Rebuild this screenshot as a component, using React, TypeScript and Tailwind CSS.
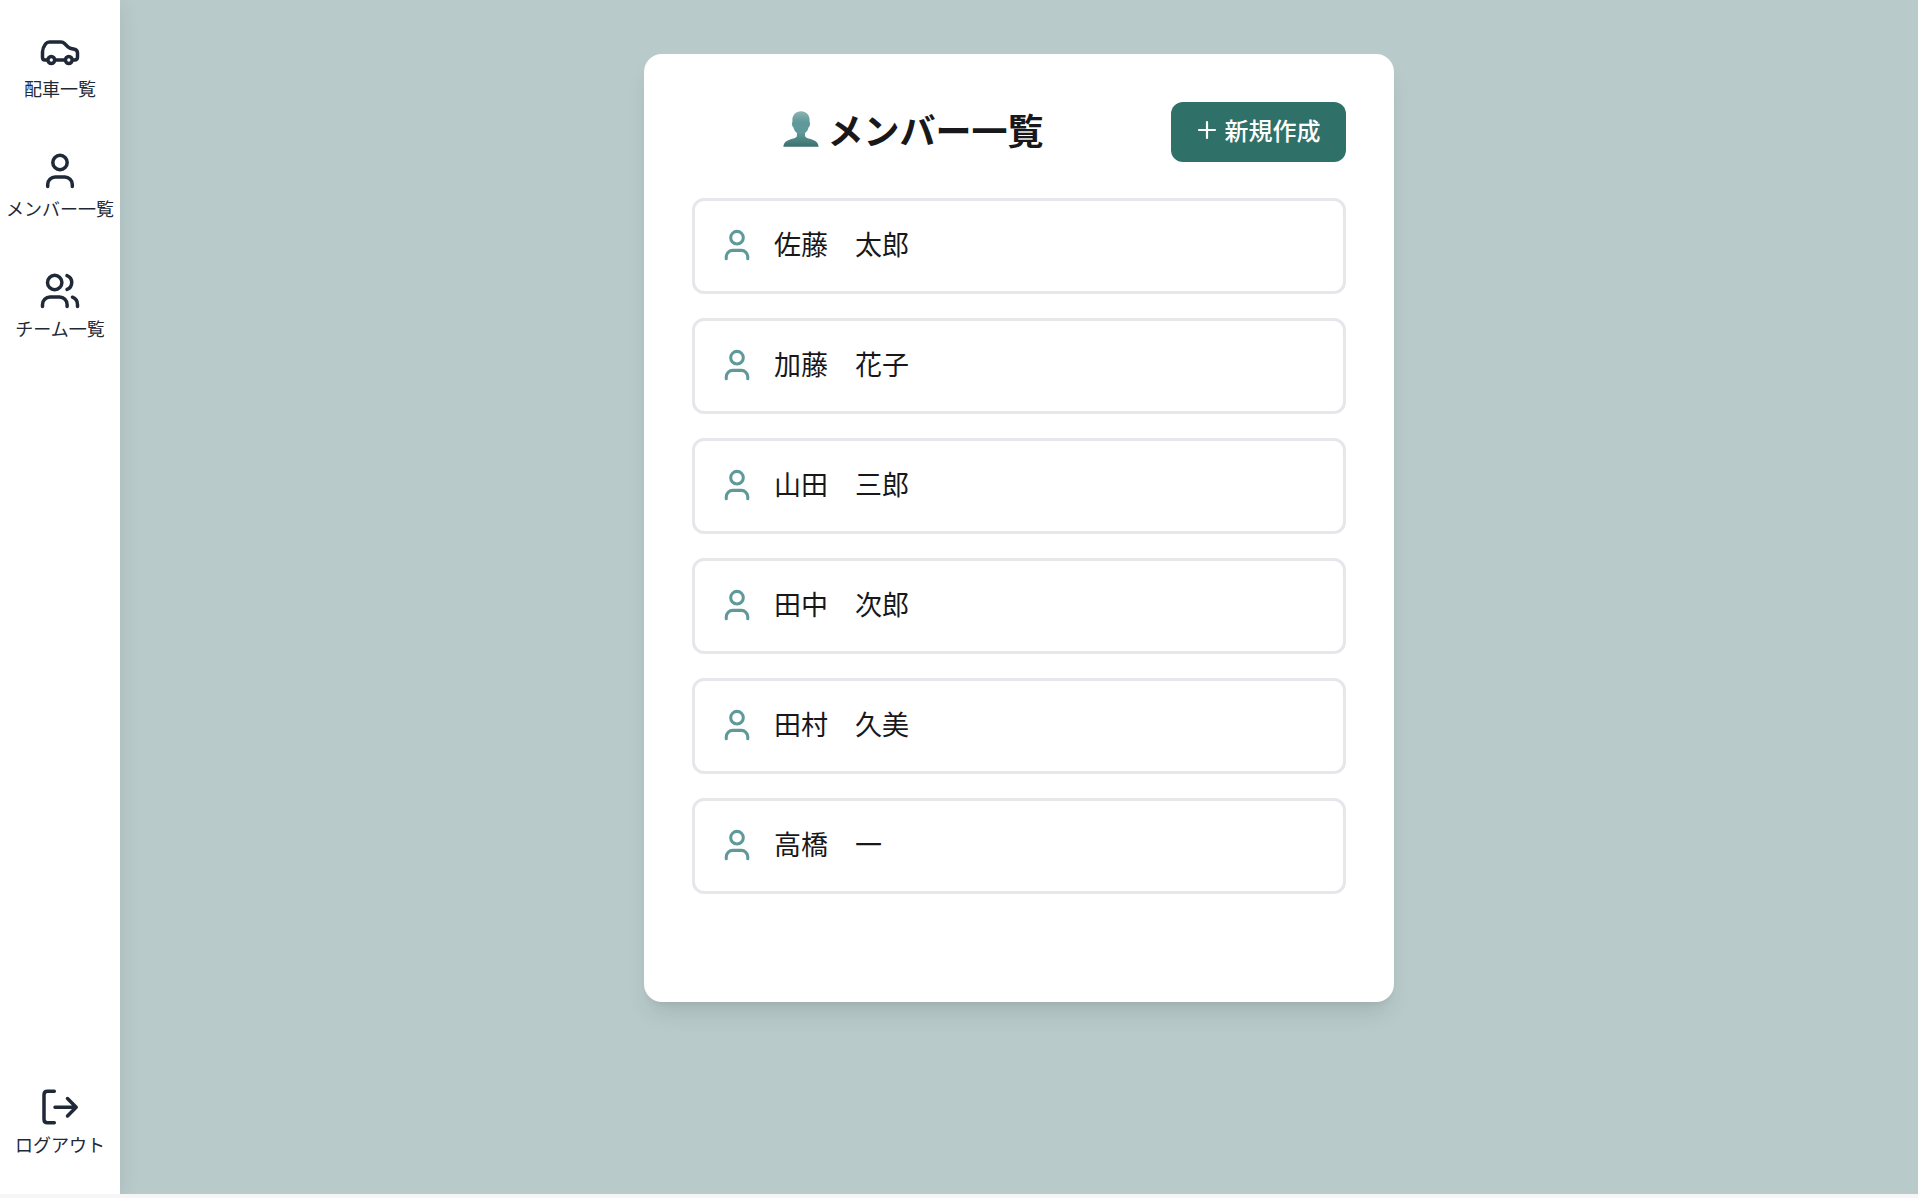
import React from "react";

type IconProps = { className?: string };

const stroke = {
  fill: "none",
  stroke: "currentColor",
  strokeLinecap: "round" as const,
  strokeLinejoin: "round" as const,
  "aria-hidden": true,
};

function CarIcon({ className }: IconProps) {
  return (
    <svg viewBox="0 0 48 48" strokeWidth="3.5" className={className} {...stroke}>
      <path d="M11 32H9q-2.500 0-2.500-2.500V24q0-4 3-8q1.500-2 4-2H25q2 0 3.500 1.500l3 3q1.500 1.500 3.500 2l3.500.8q3 .8 3 3.700V29q0 3-3 3H37.500" />
      <path d="M19.500 32H29" />
      <circle cx="15.300" cy="32" r="3.400" />
      <circle cx="32.800" cy="32" r="3.400" />
    </svg>
  );
}

function UserIcon({ className }: IconProps) {
  return (
    <svg viewBox="0 0 48 48" strokeWidth="3.5" className={className} {...stroke}>
      <circle cx="24" cy="14.500" r="7.200" />
      <path d="M11.700 38.500V36.500a7.500 7.500 0 0 1 7.500-7.500h9.600a7.500 7.500 0 0 1 7.500 7.500v2" />
    </svg>
  );
}

function UsersIcon({ className }: IconProps) {
  return (
    <svg viewBox="0 0 48 48" strokeWidth="3.5" className={className} {...stroke}>
      <circle cx="18.700" cy="14.500" r="7.200" />
      <path d="M6.500 38.500V36.500a7.500 7.500 0 0 1 7.500-7.500h9.600a7.500 7.500 0 0 1 7.500 7.500v2" />
      <path d="M31 7.600a7.400 7.400 0 0 1 0 13.800" />
      <path d="M36.500 29.200q5 1.800 5 7.500v1.800" />
    </svg>
  );
}

function LogoutIcon({ className }: IconProps) {
  return (
    <svg viewBox="0 0 48 48" strokeWidth="3.5" className={className} {...stroke}>
      <path d="M18.300 7.300H11.500q-3.500 0-3.500 3.500v24.500q0 3.500 3.500 3.500h6.800" />
      <path d="M19 23.200H40M31.500 14.500l8.700 8.700l-8.700 8.700" />
    </svg>
  );
}

function BustIcon({ className }: IconProps) {
  return (
    <svg viewBox="0 0 36 36" className={className} aria-hidden="true">
      <defs>
        <linearGradient id="bust" x1="0" y1="0" x2="0" y2="1">
          <stop offset="0" stopColor="#8fb3b3" />
          <stop offset="0.3" stopColor="#5f9999" />
          <stop offset="0.6" stopColor="#5f9999" />
          <stop offset="1" stopColor="#3c706d" />
        </linearGradient>
      </defs>
      <path
        fill="url(#bust)"
        d="M18 .3C12.800 .3 9.400 3.800 9.400 9v2.300c-.7.600-.6 2-.2 3.300.3 1 .8 1.600 1.300 1.800.5 2.500 1.700 4.300 3.500 5.600v2.500c0 1.700-1.300 2.300-3.500 2.900C4.500 29 .8 30.500 .4 35.700h35.200C35.200 30.500 31.500 29 25.500 27.400c-2.200-.6-3.500-1.200-3.500-2.900V22c1.800-1.300 3-3.100 3.500-5.600.5-.2 1-.8 1.300-1.800.4-1.300.5-2.700-.2-3.300V9C26.600 3.800 23.200 .3 18 .3Z"
      />
    </svg>
  );
}

function NavItem({
  label,
  Icon,
}: {
  label: string;
  Icon: (p: IconProps) => React.JSX.Element;
}) {
  return (
    <a
      href="#"
      className="flex h-[120px] w-full flex-col items-center pt-7 text-[18px] leading-6 whitespace-nowrap text-[#1f2937]"
    >
      <Icon className="size-12" />
      {label}
    </a>
  );
}

const members = [
  "佐藤　太郎",
  "加藤　花子",
  "山田　三郎",
  "田中　次郎",
  "田村　久美",
  "高橋　一",
];

export default function App() {
  return (
    <div className="min-h-screen bg-[#f8f5f8] pb-1 font-['Noto_Sans_CJK_JP',sans-serif]">
      <div className="flex min-h-[calc(100vh-4px)] overflow-hidden bg-[#b8caca]">
        <nav className="flex w-[120px] shrink-0 flex-col justify-between bg-white shadow-[0_4px_20px_rgba(0,0,0,0.09)]">
          <div>
            <NavItem label="配車一覧" Icon={CarIcon} />
            <NavItem label="メンバー一覧" Icon={UserIcon} />
            <NavItem label="チーム一覧" Icon={UsersIcon} />
          </div>
          <div className="pb-[18px]">
            <NavItem label="ログアウト" Icon={LogoutIcon} />
          </div>
        </nav>
        <main className="flex flex-1 items-start justify-center pt-[54px]">
          <section className="w-full max-w-[750px] rounded-[18px] bg-white px-12 pt-12 pb-[108px] shadow-[0_15px_23px_-5px_rgba(0,0,0,0.1),0_6px_9px_-6px_rgba(0,0,0,0.1)]">
            <header className="flex items-center justify-between gap-9">
              <h1 className="flex flex-1 items-center justify-center gap-2 pb-1.5 text-[36px] leading-[54px] font-bold text-[#18181b]">
                <BustIcon className="size-9" />
                メンバー一覧
              </h1>
              <button
                type="button"
                className="flex h-[60px] w-[175px] items-center justify-center gap-2 rounded-xl bg-[#2f7068] pb-1 text-2xl font-medium text-white"
              >
                <svg viewBox="0 0 20 20" strokeWidth="2.2" className="size-5" {...stroke}>
                  <path d="M10 2v16M2 10h16" />
                </svg>
                新規作成
              </button>
            </header>
            <ul className="mt-9 flex flex-col gap-6">
              {members.map((name) => (
                <li key={name}>
                  <a
                    href="#"
                    className="flex h-24 items-center gap-4 rounded-xl border-[3px] border-[#e5e7eb] px-[21px] text-[27px] text-[#18181b]"
                  >
                    <UserIcon className="size-[42px] text-[#5f9999]" />
                    <span className="pb-1">{name}</span>
                  </a>
                </li>
              ))}
            </ul>
          </section>
        </main>
      </div>
    </div>
  );
}
